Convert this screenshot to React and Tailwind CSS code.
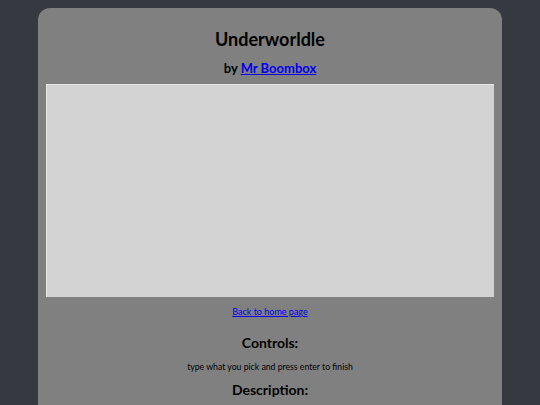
export default function App() {
    return (
        <div className="h-[405px] overflow-hidden bg-[#36393f] pt-2 font-['Lato','DejaVu_Sans',sans-serif] text-black">
            <div className="mx-auto w-[464px] rounded-t-[12px] bg-[#808080] px-2 pt-[19px] pb-4 text-center">
                <h1 className="text-[18px] leading-[24px] font-bold">Underworldle</h1>
                <p className="mt-2 text-[13px] leading-[18px] font-bold">
                    by{" "}
                    <a href="#" className="text-[#0000ee] underline">
                        Mr Boombox
                    </a>
                </p>
                <div className="mt-[7px] h-[213px] w-[448px] border-t border-l border-[#e6e6e6] bg-[#d3d3d3]" />
                <p className="mt-[9px] text-[9px] leading-[12px]">
                    <a href="#" className="text-[#0000ee] underline">
                        Back to home page
                    </a>
                </p>
                <h2 className="mt-[15px] text-[14px] leading-[20px] font-bold">Controls:</h2>
                <p className="mt-2 text-[8.7px] leading-[12px]">type what you pick and press enter to finish</p>
                <h2 className="mt-[7px] text-[14px] leading-[20px] font-bold">Description:</h2>
            </div>
        </div>
    );
}
